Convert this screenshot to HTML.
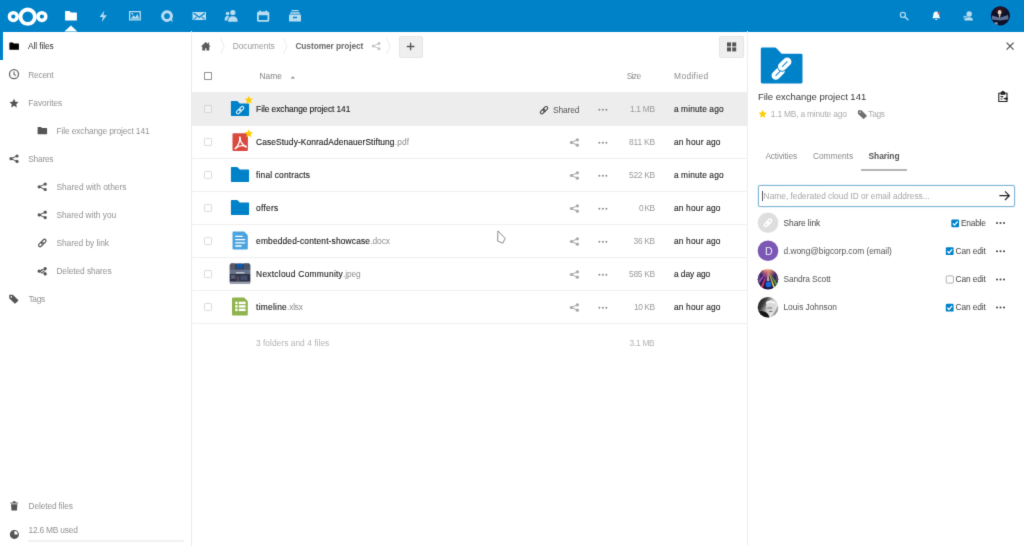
<!DOCTYPE html>
<html>
<head>
<meta charset="utf-8">
<title>Files - Nextcloud</title>
<style>
*{box-sizing:border-box;margin:0;padding:0}
html,body{width:1024px;height:546px;overflow:hidden;background:#fff}
body{font-family:"Liberation Sans",sans-serif;font-size:8.4px;color:#000;position:relative;filter:url(#soft)}
.a{position:absolute}
.t{position:absolute;white-space:pre;line-height:12px;height:12px}
svg{position:absolute;left:0;top:0;overflow:visible}
#header{position:absolute;left:0;top:0;width:1024px;height:31.5px;background:#0082c9}
.vline{position:absolute;top:31px;width:1px;height:515px;background:#ebebeb}
.hl{position:absolute;left:192px;width:555.5px;height:1px;background:#f0f0f0}
.cb{position:absolute;width:8.4px;height:8px;border:1px solid #dcdcdc;border-radius:1.2px;background:#fff}
.btn{position:absolute;background:#efefef;border:1px solid #e6e6e6;border-radius:2px}
</style>
</head>
<body>
<svg width="0" height="0" style="position:absolute"><filter id="soft" x="0" y="0" width="100%" height="100%" color-interpolation-filters="sRGB"><feConvolveMatrix order="3" kernelMatrix="0.01 0.085 0.01 0.085 0.62 0.085 0.01 0.085 0.01" edgeMode="duplicate" preserveAlpha="true"/></filter></svg>
<!-- structure -->
<div id="header"></div>
<div class="a" style="left:0;top:31.5px;width:2.5px;height:28px;background:#0082c9"></div>
<div class="vline" style="left:191px"></div>
<div class="vline" style="left:747.3px;background:#eeeeee"></div>
<!-- selected row -->
<div class="a" style="left:192px;top:92.1px;width:555.5px;height:32.5px;background:#ededed"></div>
<!-- row dividers -->
<div class="hl" style="top:125px"></div>
<div class="hl" style="top:158px"></div>
<div class="hl" style="top:191px"></div>
<div class="hl" style="top:224px"></div>
<div class="hl" style="top:257px"></div>
<div class="hl" style="top:290px"></div>
<div class="hl" style="top:323px"></div>
<!-- quota bar -->
<div class="a" style="left:28.3px;top:539.6px;width:155.3px;height:2.8px;background:#f0f0f0;border-radius:1.3px"></div>
<!-- buttons -->
<div class="btn" style="left:399px;top:35.5px;width:23.5px;height:22px"></div>
<div class="btn" style="left:718.7px;top:35.5px;width:25px;height:22px"></div>
<!-- checkboxes -->
<div class="cb" style="left:204px;top:72.1px;width:7.8px;height:7.8px;border-color:#959595;border-radius:.5px"></div>
<div class="cb" style="left:204px;top:104.9px;background:#f2f2f2;border-color:#d6d6d6"></div>
<div class="cb" style="left:204px;top:137.9px"></div>
<div class="cb" style="left:204px;top:170.9px"></div>
<div class="cb" style="left:204px;top:203.9px"></div>
<div class="cb" style="left:204px;top:236.9px"></div>
<div class="cb" style="left:204px;top:269.9px"></div>
<div class="cb" style="left:204px;top:302.9px"></div>
<!-- sharing tab underline -->
<div class="a" style="left:861px;top:169.4px;width:46px;height:1.4px;background:#b4b4b4"></div>
<!-- share input -->
<div class="a" style="left:757.8px;top:185.2px;width:256.8px;height:21.7px;border:1px solid #84b4d4;border-radius:2px;background:#fff;box-shadow:0 0 1.5px rgba(0,130,201,.35)"></div>
<div class="a" style="left:762.2px;top:190.5px;width:.8px;height:10.5px;background:#555"></div>

<svg width="1024" height="546" viewBox="0 0 1024 546">
<defs>
  <g id="share"><circle cx="7.6" cy="1.6" r="1.6"/><circle cx="1.6" cy="4.3" r="1.6"/><circle cx="7.6" cy="7" r="1.6"/><path d="M7.6,1.6 L1.6,4.3 L7.6,7" fill="none" stroke-width="1" stroke="currentColor"/></g>
  <g id="folder"><path d="M0.8,0 H6 Q6.6,0 7,0.5 L8.8,2.6 H17.4 Q18.2,2.6 18.2,3.4 V14.4 Q18.2,15.2 17.4,15.2 H0.8 Q0,15.2 0,14.4 V0.8 Q0,0 0.8,0Z"/></g>
  <g id="sfolder"><path d="M0.5,0 H3.4 L4.4,1.2 H9 Q9.5,1.2 9.5,1.7 V6.9 Q9.5,7.4 9,7.4 H0.5 Q0,7.4 0,6.9 V0.5 Q0,0 0.5,0Z"/></g>
  <g id="link"><g transform="rotate(-45)" fill="none" stroke="currentColor"><rect x="-4.6" y="-1.5" width="5.4" height="3" rx="1.5"/><rect x="-0.8" y="-1.5" width="5.4" height="3" rx="1.5"/></g></g>
  <g id="star"><path d="M4.1,0 L5.3,2.8 L8.3,3.1 L6,5.1 L6.7,8 L4.1,6.5 L1.5,8 L2.2,5.1 L0,3.1 L2.9,2.8Z"/></g>
  <g id="dots"><circle cx="1" cy="0" r="1"/><circle cx="4.5" cy="0" r="1"/><circle cx="8" cy="0" r="1"/></g>
  <g id="check"><rect x="0" y="0" width="7.8" height="7.8" rx="1.2" fill="#0082c9"/><path d="M1.6,4 L3.2,5.7 L6.3,2.1" fill="none" stroke="#fff" stroke-width="1.3"/></g>
  <g id="tag"><path d="M0,0.6 Q0,0 0.6,0 H3.6 L9,5.2 Q9.4,5.6 9,6 L6.2,8.6 Q5.8,9 5.4,8.6 L0,3.4Z"/></g>
  <clipPath id="cpA"><circle cx="1000.4" cy="15.8" r="9.6"/></clipPath>
  <clipPath id="cpS"><circle cx="768" cy="279.2" r="10.3"/></clipPath>
  <clipPath id="cpL"><circle cx="768" cy="307.3" r="10.3"/></clipPath>
  <clipPath id="cpT"><rect x="229.8" y="263.5" width="20.4" height="20.4" rx="1.5"/></clipPath>
  <radialGradient id="gS" cx="0.5" cy="0.04" r="0.95"><stop offset="0" stop-color="#f6b486"/><stop offset="0.22" stop-color="#c06a70"/><stop offset="0.45" stop-color="#3a2468"/><stop offset="1" stop-color="#161242"/></radialGradient>
  <linearGradient id="gL" x1="0" y1="0" x2="1" y2="0.6"><stop offset="0" stop-color="#111"/><stop offset="0.35" stop-color="#3a3a3a"/><stop offset="0.6" stop-color="#c8c8c8"/><stop offset="0.85" stop-color="#e6e6e6"/><stop offset="1" stop-color="#555"/></linearGradient>
</defs>

<!-- ===== header ===== -->
<g fill="none" stroke="#fff">
  <circle cx="13.3" cy="16.6" r="3.9" stroke-width="3.5"/>
  <circle cx="41.9" cy="16.6" r="3.9" stroke-width="3.5"/>
  <circle cx="27.7" cy="16.7" r="7.2" stroke-width="3.9"/>
</g>
<!-- active triangle -->
<path d="M64.4,31.6 L70.9,25.6 L77.4,31.6Z" fill="#fff"/>
<!-- files -->
<path d="M65.6,11 H69.6 L70.9,12.4 H76.4 Q76.9,12.4 76.9,12.9 V20.1 Q76.9,20.6 76.4,20.6 H65.6 Q65.1,20.6 65.1,20.1 V11.5 Q65.1,11 65.6,11Z" fill="#fff"/>
<g opacity="0.72" fill="#fff" stroke="none">
  <!-- activity bolt -->
  <path d="M104.4,10.6 L99.6,17.1 H102.8 L101.8,21.9 L106.8,15.2 H103.4Z"/>
  <!-- gallery -->
  <path d="M129,11 H140.9 V20.6 H129Z M130.3,12.3 V19.3 H139.6 V12.3Z" fill-rule="evenodd"/>
  <path d="M130.8,18.8 L133.6,15.2 L135.4,17.2 L137.4,14 L139.2,18.8Z"/>
  <circle cx="132.3" cy="13.8" r="0.9"/>
  <!-- talk -->
  <path d="M167,10.3 A5.8,5.8 0 1 0 170.6,20.6 L173.1,21.9 L172,19.2 A5.8,5.8 0 0 0 167,10.3Z M167,13.2 A2.9,2.9 0 1 1 167,19 A2.9,2.9 0 1 1 167,13.2Z" fill-rule="evenodd"/>
  <!-- mail -->
  <path d="M192.5,11.9 H206 V20 H192.5Z M193.9,12.6 L199.25,16.6 L204.6,12.6 L205.3,13.5 L199.25,18 L193.2,13.5Z M193.3,19.3 L196.6,16.4 L197.2,17 L194.2,19.7Z M205.2,19.3 L201.9,16.4 L201.3,17 L204.3,19.7Z" fill-rule="evenodd"/>
  <!-- contacts -->
  <circle cx="232.8" cy="12.5" r="2.6"/>
  <path d="M228,21.7 Q228,16.2 232.8,16.2 Q237.7,16.2 237.7,21.7Z"/>
  <circle cx="227.6" cy="13.6" r="1.8"/>
  <path d="M224.6,20.4 Q224.6,16 227.6,16 Q229,16 229.4,16.4 Q227.2,18 227.2,20.4Z"/>
  <!-- calendar -->
  <path d="M258.6,11.6 H267.7 Q269.3,11.6 269.3,13.2 V20.2 Q269.3,21.8 267.7,21.8 H258.6 Q257,21.8 257,20.2 V13.2 Q257,11.6 258.6,11.6Z M258.8,15.2 V20 H267.5 V15.2Z" fill-rule="evenodd"/>
  <rect x="259.3" y="10.4" width="1.7" height="2.6" rx="0.6"/>
  <rect x="265.3" y="10.4" width="1.7" height="2.6" rx="0.6"/>
  <!-- deck/archive -->
  <rect x="291.4" y="10" width="7.2" height="1.3" rx="0.5"/>
  <rect x="290.2" y="12.2" width="9.6" height="1.5" rx="0.5"/>
  <path d="M289.6,14.6 H300.4 Q301,14.6 301,15.2 V20.9 Q301,21.5 300.4,21.5 H289.6 Q289,21.5 289,20.9 V15.2 Q289,14.6 289.6,14.6Z M293,16.8 V18.3 H297 V16.8Z" fill-rule="evenodd"/>
</g>
<g opacity="0.68">
  <!-- search -->
  <circle cx="902.9" cy="14.9" r="2.5" fill="none" stroke="#fff" stroke-width="1.3"/>
  <path d="M904.8,16.9 L908,19.7" stroke="#fff" stroke-width="1.5" stroke-linecap="round"/>
</g>
<g opacity="0.95">
  <!-- bell -->
  <path d="M936.2,11.5 Q939.2,11.8 939.2,15.2 Q939.2,17.4 940.2,18.2 H932.2 Q933.2,17.4 933.2,15.2 Q933.2,11.8 936.2,11.5Z" fill="#fff"/>
  <path d="M935.1,18.9 H937.3 Q937.3,20 936.2,20 Q935.1,20 935.1,18.9Z" fill="#fff"/>
</g>
<g opacity="0.72">
  <!-- contacts menu -->
  <circle cx="969.2" cy="14" r="2.7" fill="#fff"/>
  <path d="M964.4,20.6 Q964.4,17.2 969.2,17.2 Q973,17.2 973,20.6Z" fill="#fff"/>
  <path d="M963.4,16.4 H967.4 M963.4,18 H966.2" stroke="#fff" stroke-width="0.9"/>
</g>
<circle cx="938.9" cy="13" r="1.3" fill="#b5624e"/>
<!-- user avatar -->
<g clip-path="url(#cpA)">
  <rect x="990" y="5" width="22" height="22" fill="#10122a"/>
  <ellipse cx="1000" cy="10" rx="4.6" ry="3.6" fill="#2a1420"/>
  <ellipse cx="999.6" cy="12.4" rx="1.9" ry="2.4" fill="#e9cdb8"/>
  <path d="M992,15.5 L999.8,17.8 L1008,15 L1008.5,19.2 L1000,20.4 L992,19.4Z" fill="#5f6f92"/>
  <path d="M998.6,14.8 L1000.6,14.8 L999.8,18.6Z" fill="#e4cfc4"/>
  <rect x="994.5" y="22.4" width="3" height="2.4" fill="#9fb4c8"/>
</g>

<!-- ===== sidebar ===== -->
<use href="#sfolder" x="9.4" y="42.4" fill="#000"/>
<g fill="none" stroke="#666" stroke-width="1.3"><circle cx="14" cy="74.2" r="4.5"/><path d="M14,71.4 V74.5 L15.9,75.6" stroke-width="1.1"/></g>
<path d="M14,98.7 L15.4,101.7 L18.6,102 L16.2,104.2 L16.9,107.4 L14,105.7 L11.1,107.4 L11.8,104.2 L9.4,102 L12.6,101.7Z" fill="#555"/>
<use href="#sfolder" x="37.6" y="126.9" fill="#555"/>
<g color="#555" fill="#555">
  <use href="#share" x="9.4" y="154.4"/>
  <use href="#share" x="37.6" y="182.5"/>
  <use href="#share" x="37.6" y="210.6"/>
</g>
<g color="#555" stroke-width="1.2"><use href="#link" x="42.3" y="243"/></g>
<!-- deleted shares -->
<g color="#555" fill="#555"><use href="#share" x="37.6" y="266.9"/><path d="M41,269.5 L46,273.5 M46,269.5 L41,273.5" stroke="#555" stroke-width="0.9"/></g>
<use href="#tag" x="9.2" y="294.8" fill="#555"/>
<circle cx="11.3" cy="296.9" r="0.8" fill="#fff"/>
<!-- trash -->
<path d="M10.4,502.6 H18 V503.6 H10.4Z M12.9,501.3 H15.5 V502.6 H12.9Z M11,504.2 H17.4 L16.9,510.4 H11.5Z" fill="#555"/>
<!-- quota -->
<circle cx="14.4" cy="534.4" r="3.9" fill="none" stroke="#555" stroke-width="1.2"/>
<path d="M14.4,534.4 L14.4,530.5 A3.9,3.9 0 1 0 18.3,534.4Z" fill="#555"/>

<!-- ===== breadcrumb ===== -->
<path d="M200.9,46.4 L205.8,41.9 L210.7,46.4 H209.3 V50.4 H206.4 V48.2 H205.2 V50.4 H202.3 V46.4Z" fill="#5c5c5c"/>
<rect x="207.9" y="42.6" width="1.2" height="2.2" fill="#5c5c5c"/>
<g fill="none" stroke="#eeeeee" stroke-width="1.1"><path d="M220.6,38.5 L224.2,46.2 L220.6,54"/><path d="M283.4,38.5 L287,46.2 L283.4,54"/><path d="M386.6,38.5 L390.2,46.2 L386.6,54"/></g>
<g color="#c4c4c4" fill="#c4c4c4" transform="translate(371.8,42) scale(0.95)"><use href="#share"/></g>
<path d="M406.8,46.5 H414.4 M410.6,42.7 V50.3" stroke="#555" stroke-width="1.3"/>
<g fill="#555"><rect x="727" y="42.4" width="4" height="4"/><rect x="732.2" y="42.4" width="4" height="4"/><rect x="727" y="47.4" width="4" height="4"/><rect x="732.2" y="47.4" width="4" height="4"/></g>
<path d="M290.6,78.4 L292.8,76.2 L295,78.4Z" fill="#8a8a8a"/>

<!-- ===== file rows ===== -->
<use href="#folder" x="230.9" y="100.9" fill="#0082c9"/>
<g color="#e8f3fa" stroke-width="1.1"><use href="#link" x="240.1" y="110.1"/></g>
<use href="#star" x="244.7" y="95.7" fill="#fc0"/>
<!-- pdf -->
<rect x="232.5" y="133.3" width="15.4" height="17.6" rx="1.2" fill="#d9493f"/>
<g fill="none" stroke="#fff" stroke-width="1.3" stroke-linecap="round"><path d="M239.9,137.2 Q240.4,143 235.2,148.8"/><path d="M239.9,137.2 Q239.6,142.4 246.2,147.2"/><path d="M235.6,148.2 Q240.6,144.4 246,146.4"/></g>
<use href="#star" x="244.7" y="129.2" fill="#fc0"/>
<use href="#folder" x="230.9" y="166.9" fill="#0082c9"/>
<use href="#folder" x="230.9" y="199.9" fill="#0082c9"/>
<!-- docx -->
<path d="M233.5,231.6 H244.2 L247.8,235.2 V248.5 Q247.8,249.5 246.8,249.5 H233.5 Q232.5,249.5 232.5,248.5 V232.6 Q232.5,231.6 233.5,231.6Z" fill="#4aa3df"/>
<path d="M235.2,236.4 H242.8 M235.2,239.6 H245.2 M235.2,242.8 H245.2 M235.2,246 H241.6" stroke="#fff" stroke-width="1.3"/>
<!-- jpeg thumb -->
<g clip-path="url(#cpT)">
  <rect x="229" y="263" width="22" height="22" fill="#3a4154"/>
  <rect x="229" y="263" width="6" height="7" fill="#5a5866"/>
  <rect x="244" y="263" width="7" height="7" fill="#4c5468"/>
  <rect x="229" y="269.6" width="22" height="4.6" fill="#68728a"/>
  <rect x="229" y="274.2" width="22" height="7.4" fill="#2a3044"/>
  <rect x="236.4" y="263.6" width="6.6" height="5" rx="2" fill="#0f58a8"/>
  <rect x="236" y="272" width="8.4" height="1.5" fill="#b9c0cc"/>
  <rect x="240.5" y="275.5" width="7" height="4.6" fill="#454f6a"/>
  <rect x="231" y="275" width="4.4" height="4" fill="#565e74"/>
  <rect x="236.4" y="276" width="3" height="5" fill="#50485a"/>
  <rect x="229" y="281.6" width="22" height="2.4" fill="#9aa0ac"/>
</g>
<!-- xlsx -->
<path d="M233,297.6 H244.2 L247.8,301.2 V314.6 Q247.8,315.6 246.8,315.6 H233 Q232,315.6 232,314.6 V298.6 Q232,297.6 233,297.6Z" fill="#8fb44e"/>
<g fill="#fff"><rect x="235.2" y="301.7" width="2.4" height="2.4"/><rect x="238.8" y="301.7" width="6.8" height="2.4"/><rect x="235.2" y="305.2" width="2.4" height="2.4"/><rect x="238.8" y="305.2" width="6.8" height="2.4"/><rect x="235.2" y="308.7" width="2.4" height="2.4"/><rect x="238.8" y="308.7" width="6.8" height="2.4"/></g>

<!-- row actions -->
<g color="#444" stroke-width="1.1"><use href="#link" x="544" y="110.2"/></g>
<g fill="#8c8c8c"><use href="#dots" x="598.4" y="109.8"/><use href="#dots" x="598.4" y="142.8"/><use href="#dots" x="598.4" y="175.8"/><use href="#dots" x="598.4" y="208.8"/><use href="#dots" x="598.4" y="241.8"/><use href="#dots" x="598.4" y="274.8"/><use href="#dots" x="598.4" y="307.8"/></g>
<g color="#a8a8a8" fill="#a8a8a8"><use href="#share" x="569.8" y="138.2"/><use href="#share" x="569.8" y="171.2"/><use href="#share" x="569.8" y="204.2"/><use href="#share" x="569.8" y="237.2"/><use href="#share" x="569.8" y="270.2"/><use href="#share" x="569.8" y="303.2"/></g>
<!-- mouse cursor -->
<path d="M497.9,230.9 L505.2,238.4 L502.8,243.2 L497.7,241.1Z" fill="#fff" stroke="#8a8a8a" stroke-width="1"/>

<!-- ===== detail panel ===== -->
<path d="M762.2,47.6 H775 Q775.8,47.6 776.4,48.3 L781.7,53.8 H801.1 Q802.5,53.8 802.5,55.2 V82.1 Q802.5,83.5 801.1,83.5 H762.2 Q760.8,83.5 760.8,82.1 V49 Q760.8,47.6 762.2,47.6Z" fill="#0082c9"/>
<g transform="translate(781.5,68.6) rotate(-45)" fill="none">
  <rect x="-11.3" y="-1.45" width="11.7" height="4.7" rx="2.35" stroke="#fff" stroke-width="3.8"/>
  <rect x="-0.4" y="-3.25" width="11.7" height="4.7" rx="2.35" stroke="#0082c9" stroke-width="5.4"/>
  <rect x="-0.4" y="-3.25" width="11.7" height="4.7" rx="2.35" stroke="#fff" stroke-width="3.8"/>
</g>
<path d="M1006.6,42.6 L1013.6,49.6 M1013.6,42.6 L1006.6,49.6" stroke="#555" stroke-width="1.3"/>
<!-- clipboard -->
<g fill="none" stroke="#222" stroke-width="1.1"><path d="M1000.6,93.2 H998.8 V101.5 H1007 V93.2 H1005.2"/><path d="M1001,94.2 V92.6 L1002.9,91.3 L1004.8,92.6 V94.2Z" fill="#222"/><path d="M1000.6,96.6 H1003.2 M1000.6,99 H1002.4 M1003.6,98.6 H1007.6"/></g>
<path d="M1005.6,96.8 L1008,98.6 L1005.6,100.4Z" fill="#222"/>
<use href="#star" x="758.6" y="109.7" fill="#fc0"/>
<g transform="translate(857.9,110.3) scale(0.98)"><use href="#tag" fill="#707070"/></g>
<circle cx="860" cy="112.3" r="0.7" fill="#e8e8e8"/>
<!-- arrow -->
<path d="M999.4,195.7 H1009 M1005,191.4 L1009.3,195.7 L1005,200" fill="none" stroke="#222" stroke-width="1.2"/>
<!-- share link avatar -->
<circle cx="768" cy="222.7" r="10.3" fill="#dedede"/>
<g color="#fff" stroke-width="1.5"><use href="#link" x="768" y="222.8"/></g>
<!-- D avatar -->
<circle cx="768" cy="250.8" r="10.3" fill="#7b58b4"/>
<!-- Sandra -->
<g clip-path="url(#cpS)">
  <rect x="757" y="268" width="22" height="22" fill="url(#gS)"/>
  <path d="M768,271 L760.6,287 L762.6,288.4Z" fill="#cf3a5c"/>
  <path d="M767.6,271 L758.6,280.5 L759.4,283.5Z" fill="#a04ac0"/>
  <path d="M768.4,271 L773.2,288 L775,287Z" fill="#e4cc3a"/>
  <path d="M768.6,271 L775.8,285.4 L777.2,283.6Z" fill="#58a848"/>
  <path d="M768,272 L766.6,281 L769.6,281Z" fill="#f0d8c0" opacity=".7"/>
  <circle cx="768.6" cy="284.4" r="2.9" fill="#1768d8"/>
  <rect x="757" y="275" width="3.4" height="6" fill="#6a5a8a" opacity=".6"/>
  <rect x="775.6" y="275" width="3.4" height="6" fill="#7a6a5a" opacity=".5"/>
</g>
<!-- Louis -->
<g clip-path="url(#cpL)">
  <rect x="757" y="296" width="22" height="23" fill="url(#gL)"/>
  <ellipse cx="770.6" cy="306" rx="4.6" ry="5.6" fill="#d8d8d8"/>
  <path d="M757,312 Q764,309 768,314 L770,318 H757Z" fill="#151515"/>
  <path d="M766,302 Q770,299 775,302 L775,304 Q770,301.4 766.4,304Z" fill="#f4f4f4"/>
  <path d="M767.4,308 H772 M769,311.4 H772.4" stroke="#555" stroke-width="0.8"/>
</g>
<!-- checkboxes -->
<use href="#check" x="951.3" y="219.4"/>
<use href="#check" x="945.8" y="247.3"/>
<rect x="946.2" y="275.9" width="7.2" height="7.2" rx="1.1" fill="#fff" stroke="#a8a8a8" stroke-width="0.9"/>
<use href="#check" x="945.8" y="303.8"/>
<g fill="#444"><use href="#dots" x="996" y="223.1"/><use href="#dots" x="996" y="251.2"/><use href="#dots" x="996" y="279.4"/><use href="#dots" x="996" y="307.6"/></g>
</svg>


<span class="t" style="left:28.10px;top:40.00px;color:#333;letter-spacing:-0.116px">All files</span>
<span class="t" style="left:28.30px;top:69.00px;color:#939393;letter-spacing:-0.269px">Recent</span>
<span class="t" style="left:28.30px;top:97.00px;color:#939393;letter-spacing:-0.057px">Favorites</span>
<span class="t" style="left:56.50px;top:125.00px;color:#939393;letter-spacing:-0.118px">File exchange project 141</span>
<span class="t" style="left:28.30px;top:153.00px;color:#939393;letter-spacing:-0.269px">Shares</span>
<span class="t" style="left:56.50px;top:181.00px;color:#939393;letter-spacing:0.009px">Shared with others</span>
<span class="t" style="left:56.40px;top:209.00px;color:#939393;letter-spacing:-0.019px">Shared with you</span>
<span class="t" style="left:56.40px;top:237.00px;color:#939393;letter-spacing:-0.037px">Shared by link</span>
<span class="t" style="left:56.40px;top:265.00px;color:#939393;letter-spacing:-0.088px">Deleted shares</span>
<span class="t" style="left:28.40px;top:293.00px;color:#939393;letter-spacing:-0.268px">Tags</span>
<span class="t" style="left:28.60px;top:500.00px;color:#939393;letter-spacing:-0.149px">Deleted files</span>
<span class="t" style="left:28.60px;top:524.00px;color:#939393;letter-spacing:-0.226px">12.6 MB used</span>
<span class="t" style="left:232.70px;top:40.00px;color:#9a9a9a;letter-spacing:-0.032px">Documents</span>
<span class="t" style="left:295.40px;top:40.00px;color:#6c6c6c;letter-spacing:-0.090px;font-weight:700">Customer project</span>
<span class="t" style="left:259.60px;top:70.00px;color:#808080;letter-spacing:-0.048px">Name</span>
<span class="t" style="left:626.70px;top:70.00px;color:#8c8c8c;letter-spacing:-0.632px">Size</span>
<span class="t" style="left:674.10px;top:70.00px;color:#8c8c8c;letter-spacing:0.335px">Modified</span>
<span class="t" style="left:256.10px;top:103.00px;color:#1c1c1c;letter-spacing:-0.068px;-webkit-text-stroke:0.12px #1c1c1c">File exchange project 141</span>
<span class="t" style="left:629.90px;top:103.00px;color:#9a9a9a;letter-spacing:-0.269px">1.1 MB</span>
<span class="t" style="left:673.90px;top:103.00px;color:#1c1c1c;letter-spacing:0.115px;-webkit-text-stroke:0.1px #1c1c1c">a minute ago</span>
<span class="t" style="left:256.10px;top:136.00px;color:#1c1c1c;letter-spacing:0.094px;-webkit-text-stroke:0.12px #1c1c1c">CaseStudy-KonradAdenauerStiftung</span>
<span class="t" style="left:394.80px;top:136.00px;color:#8c8c8c;letter-spacing:0.072px">.pdf</span>
<span class="t" style="left:629.10px;top:136.00px;color:#9a9a9a;letter-spacing:-0.172px">811 KB</span>
<span class="t" style="left:673.90px;top:136.00px;color:#1c1c1c;letter-spacing:0.188px;-webkit-text-stroke:0.1px #1c1c1c">an hour ago</span>
<span class="t" style="left:256.10px;top:169.00px;color:#1c1c1c;letter-spacing:0.159px;-webkit-text-stroke:0.12px #1c1c1c">final contracts</span>
<span class="t" style="left:629.10px;top:169.00px;color:#9a9a9a;letter-spacing:-0.297px">522 KB</span>
<span class="t" style="left:673.90px;top:169.00px;color:#1c1c1c;letter-spacing:0.115px;-webkit-text-stroke:0.1px #1c1c1c">a minute ago</span>
<span class="t" style="left:256.10px;top:202.00px;color:#1c1c1c;letter-spacing:0.261px;-webkit-text-stroke:0.12px #1c1c1c">offers</span>
<span class="t" style="left:638.90px;top:202.00px;color:#9a9a9a;letter-spacing:-0.657px">0 KB</span>
<span class="t" style="left:673.90px;top:202.00px;color:#1c1c1c;letter-spacing:0.188px;-webkit-text-stroke:0.1px #1c1c1c">an hour ago</span>
<span class="t" style="left:256.10px;top:235.00px;color:#1c1c1c;letter-spacing:0.168px;-webkit-text-stroke:0.12px #1c1c1c">embedded-content-showcase</span>
<span class="t" style="left:370.30px;top:235.00px;color:#8c8c8c;letter-spacing:-0.083px">.docx</span>
<span class="t" style="left:633.60px;top:235.00px;color:#9a9a9a;letter-spacing:-0.332px">36 KB</span>
<span class="t" style="left:673.90px;top:235.00px;color:#1c1c1c;letter-spacing:0.188px;-webkit-text-stroke:0.1px #1c1c1c">an hour ago</span>
<span class="t" style="left:256.10px;top:268.00px;color:#1c1c1c;letter-spacing:0.265px;-webkit-text-stroke:0.12px #1c1c1c">Nextcloud Community</span>
<span class="t" style="left:343.10px;top:268.00px;color:#8c8c8c;letter-spacing:-0.168px">.jpeg</span>
<span class="t" style="left:629.10px;top:268.00px;color:#9a9a9a;letter-spacing:-0.297px">585 KB</span>
<span class="t" style="left:673.90px;top:268.00px;color:#1c1c1c;letter-spacing:-0.050px;-webkit-text-stroke:0.1px #1c1c1c">a day ago</span>
<span class="t" style="left:256.10px;top:301.00px;color:#1c1c1c;letter-spacing:0.249px;-webkit-text-stroke:0.12px #1c1c1c">timeline</span>
<span class="t" style="left:287.00px;top:301.00px;color:#8c8c8c;letter-spacing:-0.188px">.xlsx</span>
<span class="t" style="left:633.90px;top:301.00px;color:#9a9a9a;letter-spacing:-0.407px">10 KB</span>
<span class="t" style="left:673.90px;top:301.00px;color:#1c1c1c;letter-spacing:0.188px;-webkit-text-stroke:0.1px #1c1c1c">an hour ago</span>
<span class="t" style="left:553.10px;top:104.00px;color:#555;letter-spacing:-0.143px">Shared</span>
<span class="t" style="left:255.90px;top:337.00px;color:#b4b4b4;letter-spacing:0.038px">3 folders and 4 files</span>
<span class="t" style="left:629.50px;top:337.00px;color:#b4b4b4;letter-spacing:-0.269px">3.1 MB</span>
<span class="t" style="left:757.90px;top:91.00px;color:#3a3a3a;letter-spacing:-0.021px;font-size:9.5px">File exchange project 141</span>
<span class="t" style="left:770.80px;top:108.00px;color:#ababab;letter-spacing:-0.190px">1.1 MB, a minute ago</span>
<span class="t" style="left:868.30px;top:108.00px;color:#ababab;letter-spacing:-0.334px">Tags</span>
<span class="t" style="left:765.40px;top:150.00px;color:#8c8c8c;letter-spacing:-0.150px">Activities</span>
<span class="t" style="left:812.90px;top:150.00px;color:#8c8c8c;letter-spacing:-0.043px">Comments</span>
<span class="t" style="left:868.50px;top:150.00px;color:#555;letter-spacing:-0.015px;font-weight:700">Sharing</span>
<span class="t" style="left:763.60px;top:190.00px;color:#a6a6a6;letter-spacing:-0.013px">Name, federated cloud ID or email address...</span>
<span class="t" style="left:783.60px;top:217.00px;color:#444;letter-spacing:-0.072px">Share link</span>
<span class="t" style="left:783.50px;top:245.00px;color:#555;letter-spacing:-0.030px">d.wong@bigcorp.com (email)</span>
<span class="t" style="left:783.50px;top:273.00px;color:#555;letter-spacing:-0.111px">Sandra Scott</span>
<span class="t" style="left:783.50px;top:301.00px;color:#555;letter-spacing:-0.051px">Louis Johnson</span>
<span class="t" style="left:960.90px;top:217.00px;color:#444;letter-spacing:-0.216px">Enable</span>
<span class="t" style="left:955.60px;top:245.00px;color:#444;letter-spacing:-0.129px">Can edit</span>
<span class="t" style="left:955.60px;top:273.00px;color:#444;letter-spacing:-0.129px">Can edit</span>
<span class="t" style="left:955.60px;top:301.00px;color:#444;letter-spacing:-0.129px">Can edit</span>
<span class="t" style="left:764.90px;top:245.00px;color:#f4eefc;letter-spacing:-0.556px;font-size:10.6px">D</span>
</body>
</html>
